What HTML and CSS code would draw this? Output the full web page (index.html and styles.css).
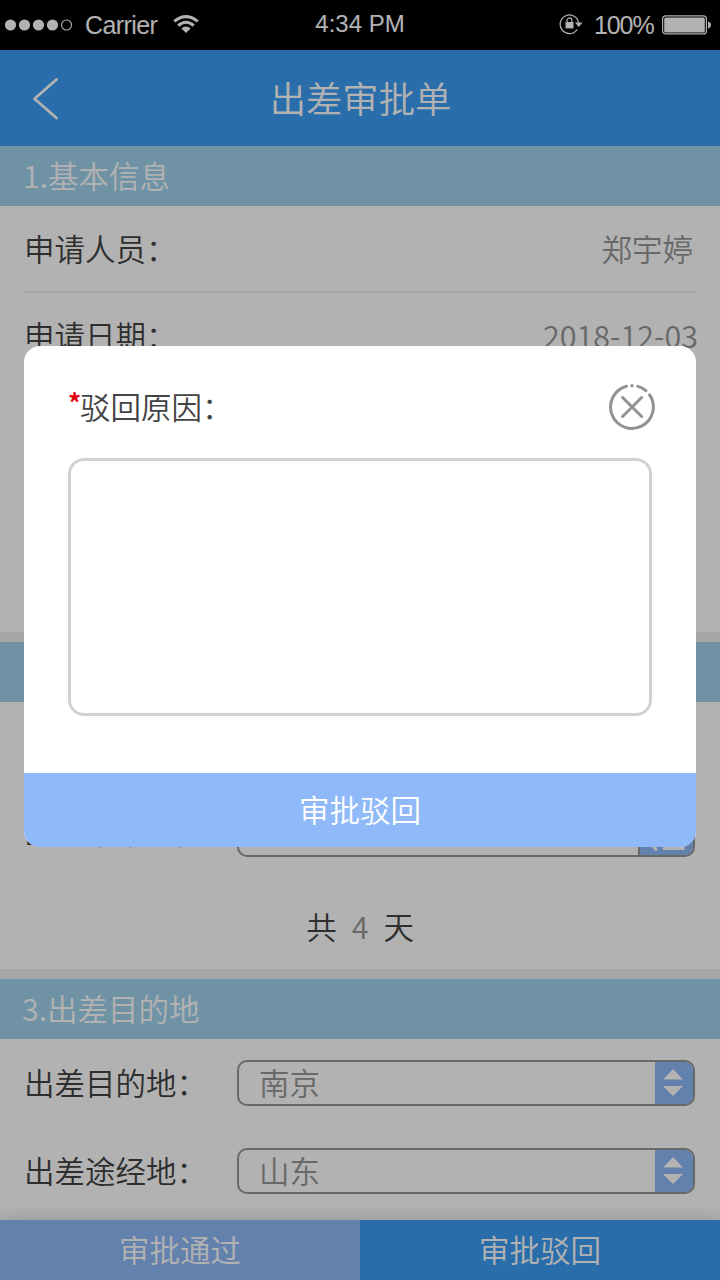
FILE: index.html
```html
<!DOCTYPE html>
<html lang="zh-CN">
<head>
<meta charset="utf-8">
<title>出差审批单</title>
<link rel="stylesheet" href="styles.css">
</head>
<body>
<div class="screen">
  <header class="status">
    <div class="status-left">
      <svg class="signal" width="70" height="14" viewBox="0 0 70 14"><g fill="#fff"><circle cx="6.5" cy="7" r="5.6"/><circle cx="20.5" cy="7" r="5.6"/><circle cx="34.5" cy="7" r="5.6"/><circle cx="48.5" cy="7" r="5.6"/></g><circle cx="62.5" cy="7" r="5" fill="none" stroke="#fff" stroke-width="1.1"/></svg>
      <span class="carrier">Carrier</span>
      <svg class="wifi" width="26" height="18" viewBox="0 0 26 18"><g fill="none" stroke="#fff" stroke-width="3"><path d="M1.2 6.4Q13-3.2 24.8 6.4"/><path d="M5.2 10.6Q13 3.9 20.8 10.6"/></g><path d="M8.4 13.4Q13 9.8 17.6 13.4L13 18Z" fill="#fff"/></svg>
    </div>
    <span class="time">4:34 PM</span>
    <div class="status-right">
      <svg class="lock" width="24" height="22" viewBox="0 0 24 22"><path d="M18.2 16.500A9.3 9.3 0 1 1 19.6 9.500" fill="none" stroke="#fff" stroke-width="1.3"/><path d="M16 9.500h7.500L19.700 14Z" fill="#fff"/><rect x="6.500" y="9" width="8" height="6.4" fill="#fff"/><path d="M8.100 9.500V7.300a2.4 2.4 0 0 1 4.8 0V9.500" fill="none" stroke="#fff" stroke-width="1.2"/></svg>
      <span class="percent">100%</span>
      <svg class="battery" width="49" height="20" viewBox="0 0 49 20"><rect x=".6" y=".9" width="43.8" height="18" rx="3" fill="none" stroke="#fff" stroke-width="1.2"/><rect x="2.2" y="2.4" width="40.6" height="15" rx="1.5" fill="#fff"/><path d="M46 6.6q3 .8 3 3.4t-3 3.4z" fill="#fff"/></svg>
    </div>
  </header>
  <nav class="nav">
    <svg class="back" width="30" height="44" viewBox="0 0 30 44"><path d="M26.5 2.5L4.5 21.8 26.5 41" fill="none" stroke="#fff" stroke-width="2.8" stroke-linecap="round" stroke-linejoin="round"/></svg>
    <h1 class="title">出差审批单</h1>
  </nav>
  <main class="content">
    <section class="section basic">
      <h2 class="heading">1.基本信息</h2>
      <div class="row"><span>申请人员：</span><span class="value person">郑宇婷</span></div>
      <div class="row"><span>申请日期：</span><span class="value">2018-12-03</span></div>
    </section>
    <section class="section period">
      <h2 class="heading second">2.出差时间</h2>
      <div class="fields">
        <div class="field raised"><span class="label">出差开始时间：</span><div class="select"><i class="calendar"></i></div></div>
        <div class="field raised"><span class="label">出差结束时间：</span><div class="select"><i class="calendar"><svg width="55" height="42" viewBox="0 0 55 42"><g fill="none" stroke="#fff" stroke-width="3" stroke-linecap="round"><path d="M13 8h30v27.500H24M16 36.500L13 33"/></g></svg></i></div></div>
        <p class="total"><span>共</span><span class="value">4</span><span>天</span></p>
      </div>
    </section>
    <section class="section places">
      <h2 class="heading third">3.出差目的地</h2>
      <div class="fields">
        <div class="field"><span class="label">出差目的地：</span><div class="select"><span class="value">南京</span><i class="stepper"><svg width="38" height="42" viewBox="0 0 38 42"><path d="M8 17.500L18 7l10 10.500zM8 24h20L18 34z" fill="#fff"/></svg></i></div></div>
        <div class="field"><span class="label">出差途经地：</span><div class="select"><span class="value">山东</span><i class="stepper"><svg width="38" height="42" viewBox="0 0 38 42"><path d="M8 17.500L18 7l10 10.500zM8 24h20L18 34z" fill="#fff"/></svg></i></div></div>
      </div>
    </section>
  </main>
  <footer class="footer"><div class="action pass">审批通过</div><div class="action">审批驳回</div></footer>
  <div class="mask"></div>
  <div class="dialog">
    <div class="dialog-head">
      <span class="reason"><b class="star">*</b>驳回原因：</span>
      <svg class="close" width="50" height="50" viewBox="0 0 50 50"><g fill="none" stroke="#929292" stroke-width="3" stroke-linecap="round"><path d="M42.600 12.900A21.400 21.400 0 1 1 19.500 4.300M30.800 4.400A21.400 21.400 0 0 1 38.800 8.700M15.600 15.500L34.600 34.500M34.600 15.500L15.600 34.500"/></g><circle cx="25" cy="3.800" r="1.700" fill="#929292"/></svg>
    </div>
    <div class="textbox"></div>
    <div class="submit">审批驳回</div>
  </div>
</div>
</body>
</html>
```
FILE: styles.css
```css
* { box-sizing: border-box; }
body { margin: 0; }
.screen {
  position: relative;
  display: flex;
  flex-direction: column;
  width: 720px;
  height: 1280px;
  overflow: hidden;
  background: #fff;
  color: #434343;
  font: 350 30.5px/44px "Noto Sans CJK SC", sans-serif;
}
h1, h2, p { margin: 0; font-weight: 350; }
svg { display: block; }

.status {
  display: grid;
  grid-template-columns: 1fr auto 1fr;
  align-items: center;
  height: 50px;
  flex: none;
  background: #000;
  color: #fff;
  font: 25px/48px "Liberation Sans", Arial, sans-serif;
}
.status-left, .status-right { display: flex; align-items: center; height: 50px; }
.status-left { padding-left: 4px; }
.carrier { margin-left: 11px; width: 73px; letter-spacing: -.6px; }
.wifi { margin: -2px 0 0 15px; }
.time { height: 50px; font-size: 24px; }
.status-right { justify-content: flex-end; padding-right: 9px; }
.lock { margin-top: -2px; }
.percent { margin: 0 8px 0 11px; width: 60px; letter-spacing: -1.1px; white-space: nowrap; }

.nav {
  display: grid;
  grid-template-columns: 100px 1fr 100px;
  align-items: center;
  height: 96px;
  flex: none;
  background: #3c9df4;
  color: #fff;
}
.back { margin: 1px 0 0 30px; }
.title { font-size: 36.3px; text-align: center; padding: 0 0 3px 1px; }

.content { flex: 1; min-height: 0; }
.section + .section { border-top: 10px solid #f0f0f2; }
.heading {
  height: 60px;
  padding-left: 23px;
  background: #9fd3ed;
  color: #fff;
  font-size: 30.5px;
  line-height: 58px;
}
.third { padding-left: 22px; }
.basic { height: 486px; }
.period { height: 337px; }
.row {
  display: flex;
  justify-content: space-between;
  align-items: center;
  height: 87px;
  margin: 0 24px;
  padding-bottom: 2px;
  border-bottom: 2px solid #f1f1f1;
}
.row:last-child { border-color: transparent; }
.row .value { margin-right: -2px; }
.row .person { margin-right: 3px; }
.value { color: #969696; }
.fields { display: flex; flex-direction: column; gap: 42px; padding: 21px 25px 0 24px; }
.field { display: grid; grid-template-columns: 213px 1fr; align-items: center; height: 46px; white-space: nowrap; }
.label { padding-bottom: 2px; }
.raised .label { padding-bottom: 6px; line-height: 38px; }
.select {
  display: flex;
  align-items: center;
  justify-content: space-between;
  height: 46px;
  overflow: hidden;
  border: 2px solid #969696;
  border-radius: 10px;
  padding-left: 20px;
}
.select .value { padding-bottom: 2px; }
.stepper { width: 38px; height: 42px; background: #8fb9f8; }
.calendar { width: 55px; height: 42px; margin-left: auto; border-left: 2px solid #969696; background: #8fb9f8; }
.total { display: flex; justify-content: center; gap: 15px; margin-top: 5px; padding-left: 1px; }

.footer {
  display: flex;
  height: 60px;
  flex: none;
  position: relative;
  box-shadow: 0 0 16px rgba(0, 0, 0, .2);
  color: #fff;
  line-height: 58px;
  text-align: center;
}
.action { flex: 1; background: #3c9df4; }
.pass { background: #8fb9f8; }

.mask { position: absolute; inset: 0; background: rgba(0, 0, 0, .3); }
.dialog {
  position: absolute;
  left: 24px;
  top: 346px;
  display: flex;
  flex-direction: column;
  width: 672px;
  height: 501px;
  overflow: hidden;
  border-radius: 16px;
  background: #fff;
}
.dialog-head { display: flex; justify-content: space-between; align-items: center; height: 112px; padding: 10px 39px 0 44px; }
.reason { display: flex; padding-bottom: 2px; }
.star { width: 12px; color: #e60012; font-size: 26px; font-weight: 700; line-height: 36px; }
.textbox { height: 258px; margin: 0 44px; border: 3px solid #d2d2d2; border-radius: 16px; }
.submit { height: 74px; margin-top: auto; background: #8fb9f8; color: #fff; line-height: 72px; text-align: center; }
```
